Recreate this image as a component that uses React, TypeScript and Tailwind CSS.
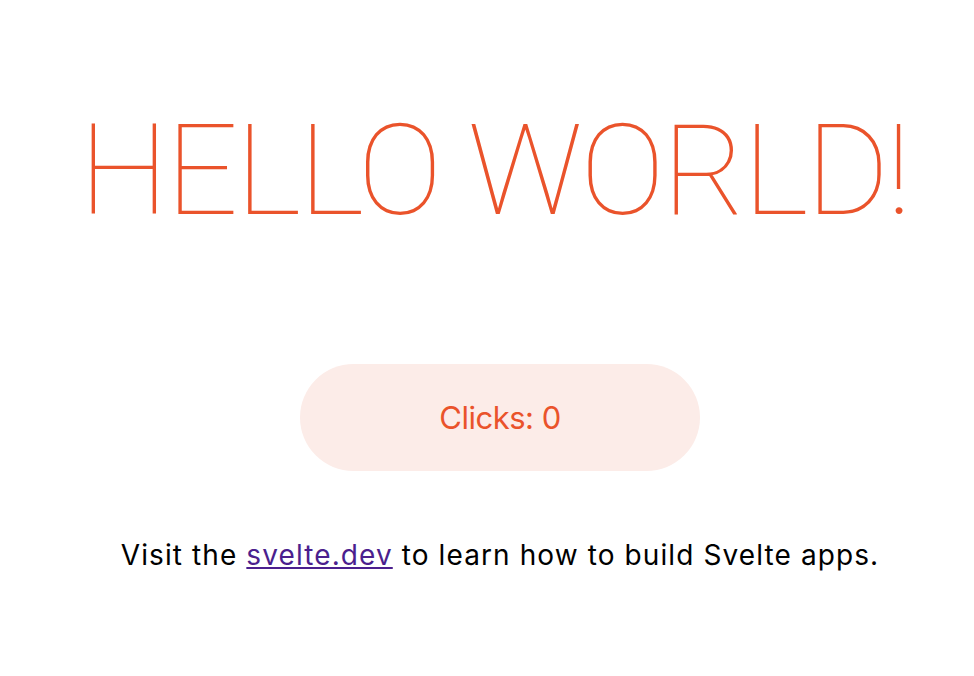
export default function App() {
  return (
    <main className="flex min-h-[676px] flex-col items-center bg-white pt-[96px] pl-[26px] text-center font-['Inter',sans-serif]">
      <h1 className="pr-[12px] font-['Roboto',sans-serif] text-[127px] leading-[150px] font-thin tracking-[-2.5px] uppercase text-[#ea532b]">
        Hello world!
      </h1>
      <button className="mt-[118px] h-[107px] w-[400px] rounded-full bg-[#fcece8] pt-[2px] text-[31px] tracking-[-0.5px] text-[#ea532b]">
        Clicks: 0
      </button>
      <p className="mt-[63px] text-[28px] tracking-[1.1px] text-black">
        Visit the{" "}
        <a href="#" className="text-[#4b1f8e] underline">
          svelte.dev
        </a>{" "}
        to learn how to build Svelte apps.
      </p>
    </main>
  )
}
